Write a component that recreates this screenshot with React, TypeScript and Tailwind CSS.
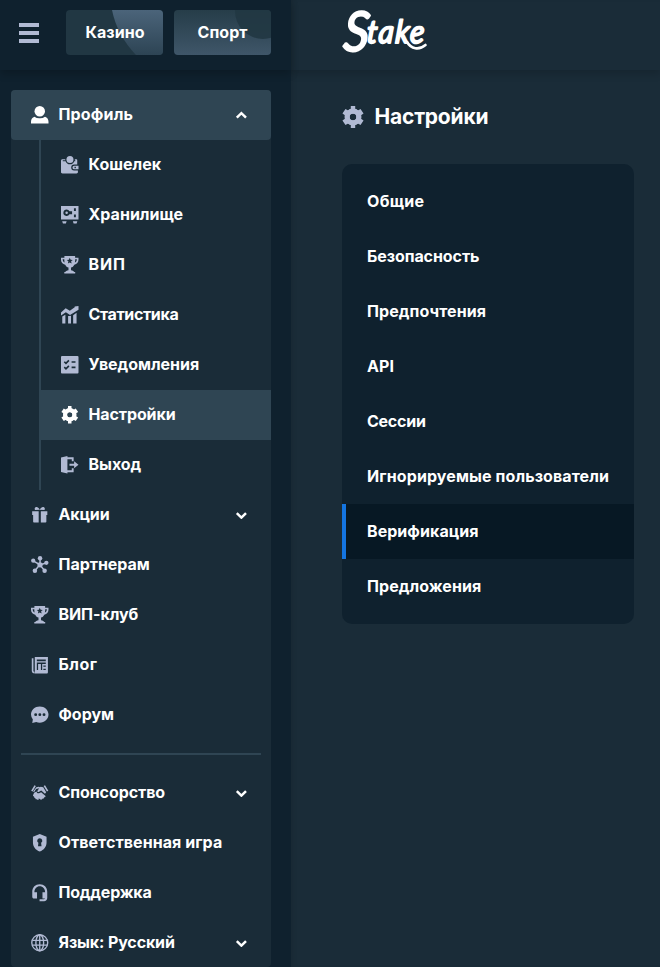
import React from 'react';

interface NavItem {
  label: string;
  icon: React.ReactNode;
  tracking: string;
  arrow?: 'up' | 'down';
  active?: boolean;
}

interface TabItem {
  label: string;
  tracking: string;
  active?: boolean;
}

const Icon: React.FC<{ children: React.ReactNode }> = ({ children }) => (
  <svg viewBox="0 0 18 18" className="w-[17.5px] h-[17.5px] shrink-0" fill="currentColor">
    {children}
  </svg>
);

const GearIcon: React.FC<{ className?: string }> = ({ className = 'w-[17.5px] h-[17.5px]' }) => (
  <svg viewBox="0 0 24 24" className={`shrink-0 ${className}`} fill="currentColor">
    <path
      fillRule="evenodd"
      d="M9.6 0h4.8v3.3l2.9 1.7 2.9-1.7 3.3 4.8-2.7 1.9v4l2.7 1.9-3.3 4.8-2.9-1.7-2.9 1.7V24H9.6v-3.3L6.7 19l-2.9 1.7L.5 15.9 3.2 14v-4L.5 8.1l3.3-4.8L6.7 5l2.9-1.7zM12 8.3a3.7 3.7 0 1 0 0 7.4 3.7 3.7 0 0 0 0-7.4z"
    />
    <circle cx="12" cy="12" r="6.4" fill="none" stroke="currentColor" strokeWidth="5.6" />
  </svg>
);

const UserIcon = () => (
  <Icon>
    <circle cx="9" cy="5.4" r="5.4" />
    <path d="M0 18v-1.8c0-2.6 1.4-4.6 3.6-5.2A8 8 0 0 0 9 12.7 8 8 0 0 0 14.4 11c2.2.6 3.6 2.6 3.6 5.2V18z" />
  </Icon>
);

const WalletIcon = () => (
  <Icon>
    <circle cx="9.2" cy="3.6" r="3.6" />
    <path d="M1.5 3.4h2.9v1H1.8v.9h2.9C5.5 7.3 7 8.5 9.2 8.5s3.8-1.2 4.5-3.2h1v-.9h-.5v-1h1.5c.7 0 1 .4 1 1v4.4h-3.2a3 3 0 0 0 0 6h3.9v1.700c0 1-.6 1.500-1.500 1.500H1.500C.6 18 0 17.500 0 16.500V5c0-1 .6-1.600 1.500-1.600z" />
    <path fillRule="evenodd" d="M13.7 9.9H18v3.8h-4.3a1.9 1.9 0 0 1 0-3.8zm.2 1.2v1.4h1.4v-1.4z" />
  </Icon>
);

const VaultIcon = () => (
  <Icon>
    <path
      fillRule="evenodd"
      d="M0 0h18v14H0zM5.8 3.6a3.3 3.3 0 1 0 2.9 4.8h2.7V5.5H8.7a3.3 3.3 0 0 0-2.9-1.9zM5.8 5.7a1.3 1.3 0 1 1 0 2.6 1.3 1.3 0 0 1 0-2.6zM13.3 2.4v2.8h2V2.4zm0 6.3v2.8h2V8.7z"
    />
    <path d="M1.2 15.7h4.6L5 18H2zm11 0h4.6L16 18h-3z" />
  </Icon>
);

const TrophyIcon = () => (
  <Icon>
    <path
      fillRule="evenodd"
      d="M3.5 0h11v1.7H18v2.2c0 2.6-1.7 4.6-4.3 5-.8 1.6-2 2.7-3.4 3v2.7c1.8.2 3 .9 3.3 1.9h1V18H3.4v-1.5h1c.3-1 1.5-1.7 3.3-1.9v-2.7c-1.4-.3-2.6-1.4-3.4-3C1.7 8.5 0 6.5 0 3.9V1.7h3.5zM1.7 3.3c0 1.6.7 2.9 2 3.5-.3-1-.3-2.2-.3-3.5zm14.6 0h-1.7c0 1.3 0 2.5-.3 3.5 1.3-.6 2-1.9 2-3.5zM9 1.8l-.9 2-2.2.2 1.7 1.5-.5 2.2L9 6.6l1.9 1.1-.5-2.2L12.1 4l-2.2-.2z"
    />
  </Icon>
);

const StatsIcon = () => (
  <Icon>
    <path d="M0 6.600l4.800-4.200 4.300 2.600 5-3.600V.4L18 0v3.900l-8.700 5.300L5 6.500 0 9.800z" />
    <path d="M1.3 10.9l3.2-2V18H1.3zm6-.6h1l2-.2V18h-3zm5.2-.9l3.500-2.400V18h-3.500z" />
  </Icon>
);

const ChecklistIcon = () => (
  <Icon>
    <path d="M1 0h16a1 1 0 0 1 1 1v16a1 1 0 0 1-1 1H1a1 1 0 0 1-1-1V1a1 1 0 0 1 1-1z" />
    <path
      d="M3.4 5.9l1.7 1.6 3-3M3.4 11.5l1.7 1.6 3-3M10.9 6.2h4M10.9 11.7h4"
      fill="none"
      stroke="#1a2c38"
      strokeWidth="1.7"
    />
  </Icon>
);

const LogoutIcon = () => (
  <Icon>
    <path d="M0 1.5L6.6 0v18L0 16.5z" />
    <path d="M6 1.4h7v4.1h-1.9V3.3H6zM6 14.7h5.1v-2.2H13v4.1H6z" />
    <path d="M8.7 8h4.8V5.4L18 9l-4.5 3.6V10H8.7z" />
  </Icon>
);

const GiftIcon = () => (
  <Icon>
    <path d="M9 3.8C7.8 1.2 6 .5 4.7 1.2c-1 .6-1.2 1.9-.6 2.9zM9 3.8c1.2-2.6 3-3.3 4.3-2.6 1 .6 1.2 1.9.6 2.9z" />
    <path d="M1.2 5.3h6.7v3.9H1.2zm8.9 0h6.7v3.9h-6.7zM2.2 9.2h5.7V17H3a.8.8 0 0 1-.8-.8zm7.9 0h5.7v7c0 .5-.3.8-.8.8h-4.9z" />
  </Icon>
);

const AffiliateIcon = () => (
  <Icon>
    <path d="M9.3 9V2.5M9.3 9L2.2 5M9.3 9l6.5-1.8M9 9l-4.6 5.6M9 9l4.7 5.6" stroke="currentColor" strokeWidth="1.5" />
    <circle cx="9.3" cy="9" r="2.7" />
    <circle cx="9.3" cy="2.4" r="2.3" />
    <circle cx="2.3" cy="4.8" r="2.2" />
    <circle cx="15.8" cy="7" r="2.2" />
    <circle cx="4" cy="15.2" r="2.3" />
    <circle cx="14" cy="15.2" r="2.3" />
  </Icon>
);

const BlogIcon = () => (
  <Icon>
    <path d="M.8 2.3h1.7v12.8c0 .8.5 1.2 1.2 1.2V18C2 18 .8 17 .8 15.2z" />
    <path
      fillRule="evenodd"
      d="M3.9 1H17.4v15.6c0 .9-.5 1.4-1.4 1.4H3.9zM6 3.6v1.8h9.2V3.6zM6 6.8v7.7h1.3V8.3h2.9v6.2h1.3V8.3h3.7V6.8zm6.7 3v1.3h2.5V9.8zm0 3.2v1.5h2.5V13z"
    />
  </Icon>
);

const ForumIcon = () => (
  <Icon>
    <path
      fillRule="evenodd"
      d="M9 .5c5 0 9 3.6 9 8.3s-4 8.3-9 8.3c-1.3 0-2.5-.2-3.6-.7L1.3 17.5l.6-3.7A8 8 0 0 1 0 8.8C0 4.1 4 .5 9 .5zM4.8 7.4a1.5 1.5 0 1 0 0 3 1.5 1.5 0 0 0 0-3zm4.300 0a1.500 1.500 0 1 0 0 3 1.500 1.500 0 0 0 0-3zm4.300 0a1.500 1.500 0 1 0 0 3 1.500 1.500 0 0 0 0-3z"
    />
  </Icon>
);

const HandshakeIcon = () => (
  <Icon>
    <path d="M4.3 1.7L.9 7.4M13.7 1.7l3.4 5.7" stroke="currentColor" strokeWidth="1.7" />
    <path d="M5.500 3.400l2.500-.5 1 .5 1-.5 2.600.5 3 5.200-1.200 1.300-3.900-3.300-2.600 1.600c-1 .4-1.700-.5-1.200-1.300l1.700-2.500-3.200.7-2 3.300-1-.7z" />
    <path d="M3.200 8.900l2.500-1.200c.2 1.700 1.700 2.400 3.200 1.600l1.500-.9 4.300 3.700c.7.900-.3 2-1.300 1.500.4 1-.8 1.900-1.700 1.300 0 1-1.100 1.500-1.900 1l-2-1.200.3.900c-.6.900-1.700.8-2.100 0-1 .3-1.700-.5-1.500-1.300-1 .1-1.600-.7-1.300-1.500-1-.1-1.500-1-.9-1.800z" />
  </Icon>
);

const ShieldIcon = () => (
  <Icon>
    <path
      fillRule="evenodd"
      d="M9 0l7 2.7v6c0 4.3-2.8 7.8-7 9.3-4.2-1.5-7-5-7-9.3v-6zM9 4.3a2.6 2.6 0 0 0-1.4 4.8L7.2 12.7h3.6l-.4-3.6A2.6 2.6 0 0 0 9 4.3z"
    />
  </Icon>
);

const SupportIcon = () => (
  <Icon>
    <path d="M1.3 8C1.3 3.5 4.6.3 9 .3S16.7 3.5 16.7 8v6.5c0 1.9-1.4 3.2-3.2 3.2H8.8v-2.1h4.4c.6 0 1-.2 1.3-.7h-2.7V8.4h2.7C14.4 4.9 12.2 2.4 9 2.4S3.6 4.9 3.5 8.4h2.7v6.5H3.1c-1.1 0-1.8-.7-1.8-1.8z" />
  </Icon>
);

const GlobeIcon = () => (
  <Icon>
    <g fill="none" stroke="currentColor" strokeWidth="1.4">
      <circle cx="9" cy="9" r="8.2" />
      <ellipse cx="9" cy="9" rx="4" ry="8.2" />
      <path d="M9 1v16M1.3 6.6h15.4M1.3 11.5h15.4" />
    </g>
  </Icon>
);

const Chevron: React.FC<{ dir: 'up' | 'down' }> = ({ dir }) => (
  <svg viewBox="0 0 12 8" className="ml-auto w-3 h-2" fill="none" stroke="#fff" strokeWidth="2.5">
    <path d={dir === 'up' ? 'M1.8 6.6L6.4 2.2 11 6.600' : 'M1.8 2.200L6.400 6.600 11 2.200'} />
  </svg>
);

const StakeLogo = () => (
  <svg viewBox="0 0 90 50" className="w-[90px] h-[50px] overflow-visible" fill="#fff" stroke="#fff" strokeLinejoin="round">
    <text
      transform="translate(0.5 41.5) skewX(-4) scale(0.93 1)"
      fontFamily="Lato"
      fontStyle="italic"
      fontWeight="400"
      strokeWidth="1.9"
    >
      <tspan fontSize="55">S</tspan>
      <tspan fontSize="32" dx="-3" dy="-7.5" letterSpacing="1.6">take</tspan>
    </text>
    <path d="M65 33c4 7 12 8.500 18.500 3" fill="none" strokeWidth="2.6" strokeLinecap="round" />
  </svg>
);

const profileItems: NavItem[] = [
  { label: 'Кошелек', icon: <WalletIcon />, tracking: 'tracking-[0.02px]' },
  { label: 'Хранилище', icon: <VaultIcon />, tracking: 'tracking-[0.02px]' },
  { label: 'ВИП', icon: <TrophyIcon />, tracking: 'tracking-[0.9px]' },
  { label: 'Статистика', icon: <StatsIcon />, tracking: 'tracking-[-0.38px]' },
  { label: 'Уведомления', icon: <ChecklistIcon />, tracking: 'tracking-[-0.04px]' },
  { label: 'Настройки', icon: <GearIcon />, tracking: 'tracking-[-0.12px]', active: true },
  { label: 'Выход', icon: <LogoutIcon />, tracking: 'tracking-[-0.05px]' },
];

const mainItems: NavItem[] = [
  { label: 'Акции', icon: <GiftIcon />, tracking: 'tracking-[-0.15px]', arrow: 'down' },
  { label: 'Партнерам', icon: <AffiliateIcon />, tracking: 'tracking-[-0.05px]' },
  { label: 'ВИП-клуб', icon: <TrophyIcon />, tracking: 'tracking-[-0.08px]' },
  { label: 'Блог', icon: <BlogIcon />, tracking: 'tracking-[0.5px]' },
  { label: 'Форум', icon: <ForumIcon />, tracking: 'tracking-[0px]' },
];

const bottomItems: NavItem[] = [
  { label: 'Спонсорство', icon: <HandshakeIcon />, tracking: 'tracking-[-0.08px]', arrow: 'down' },
  { label: 'Ответственная игра', icon: <ShieldIcon />, tracking: 'tracking-[0.06px]' },
  { label: 'Поддержка', icon: <SupportIcon />, tracking: 'tracking-[-0.2px]' },
  { label: 'Язык: Русский', icon: <GlobeIcon />, tracking: 'tracking-[-0.13px]', arrow: 'down' },
];

const tabs: TabItem[] = [
  { label: 'Общие', tracking: 'tracking-[0.3px]' },
  { label: 'Безопасность', tracking: 'tracking-[-0.08px]' },
  { label: 'Предпочтения', tracking: 'tracking-[0.08px]' },
  { label: 'API', tracking: 'tracking-[0.05px]' },
  { label: 'Сессии', tracking: 'tracking-[-0.25px]' },
  { label: 'Игнорируемые пользователи', tracking: 'tracking-[0.1px]' },
  { label: 'Верификация', tracking: 'tracking-[0.05px]', active: true },
  { label: 'Предложения', tracking: 'tracking-[0.06px]' },
];

const NavRow: React.FC<{ item: NavItem }> = ({ item }) => (
  <a
    className={`flex items-center h-[50px] pl-5 pr-6 text-base whitespace-nowrap ${
      item.active ? 'bg-[#2f4553] text-white' : 'text-[#b1bad3]'
    }`}
  >
    {item.icon}
    <span className={`ml-2.5 -mt-0.5 text-white ${item.tracking}`}>{item.label}</span>
    {item.arrow && <Chevron dir={item.arrow} />}
  </a>
);

const Sidebar = () => (
  <aside className="w-[291px] h-full shrink-0 bg-[#0f212e] flex flex-col">
    <div className="h-[70px] shrink-0 flex items-center pl-[19px] pb-[5px] shadow-[0_4px_8px_rgba(0,0,0,0.2)]">
      <button className="w-5 h-5 flex flex-col justify-between">
        <span className="w-5 h-1 bg-[#b1bad3]" />
        <span className="w-5 h-1 bg-[#b1bad3]" />
        <span className="w-5 h-1 bg-[#b1bad3]" />
      </button>
      <button className="relative ml-[27px] w-[97px] h-[45px] rounded-[4px] overflow-hidden bg-[#213743]">
        <svg className="absolute inset-0" width="97" height="45">
          <defs>
            <linearGradient id="casino" x1="0" y1="0" x2="0" y2="1">
              <stop offset="0" stopColor="#4b647a" />
              <stop offset="1" stopColor="#2d4454" />
            </linearGradient>
          </defs>
          <path d="M46 0Q51 25 70 45H97V0z" fill="url(#casino)" />
        </svg>
        <span className="relative top-[-1px] left-[0.5px] tracking-[0.05px]">Казино</span>
      </button>
      <button className="relative ml-[11px] w-[97px] h-[45px] rounded-[4px] overflow-hidden bg-linear-to-b from-[#263d49] to-[#3f5669]">
        <svg className="absolute inset-0" width="97" height="45">
          <circle cx="89" cy="1" r="28" fill="#213743" opacity="0.9" />
        </svg>
        <span className="relative top-[-1px] tracking-[0.05px]">Спорт</span>
      </button>
    </div>

    <nav className="mt-5 ml-[11px] w-[260px] h-[877px] bg-[#1a2c38] rounded-[4px]">
      <div className="bg-[#2f4553] rounded-[4px]">
        <a className="flex items-center h-[50px] pl-5 pr-6 text-white">
          <UserIcon />
          <span className="ml-2.5 -mt-0.5 tracking-[0.16px]">Профиль</span>
          <Chevron dir="up" />
        </a>
      </div>
      <div className="ml-7 border-l-2 border-[#2f4553]">
        {profileItems.map((item) => (
          <NavRow key={item.label} item={item} />
        ))}
      </div>
      {mainItems.map((item) => (
        <NavRow key={item.label} item={item} />
      ))}
      <div className="mx-2.5 my-[13px] h-0.5 bg-[#2f4553]" />
      {bottomItems.map((item) => (
        <NavRow key={item.label} item={item} />
      ))}
    </nav>
  </aside>
);

const App: React.FC = () => {
  return (
    <div className="flex w-full h-[967px] overflow-hidden bg-[#1a2c38] text-white text-base font-bold font-['Inter','Noto_Sans',sans-serif]">
      <Sidebar />
      <main className="flex-1 min-w-0 overflow-hidden shadow-[inset_4px_0_6px_-4px_rgba(0,0,0,0.15)]">
        <header className="h-[70px] pl-[51px] pt-[9px] shadow-[0_4px_8px_rgba(0,0,0,0.16)]">
          <StakeLogo />
        </header>
        <div className="pl-[51px] pr-[26px]">
          <div className="flex items-center h-[94px]">
            <GearIcon className="w-[22px] h-[22px] text-[#b1bad3]" />
            <h1 className="ml-[10.5px] text-[21px] leading-7 tracking-[-0.2px]">Настройки</h1>
          </div>
          <div className="py-2.5 rounded-[10px] bg-[#0f212e]">
            {tabs.map((tab) => (
              <a
                key={tab.label}
                className={`flex items-center h-[55px] pl-[21px] pb-0.5 border-l-4 whitespace-nowrap ${
                  tab.active ? 'bg-[#071824] border-[#1475e1]' : 'border-transparent'
                } ${tab.tracking}`}
              >
                {tab.label}
              </a>
            ))}
          </div>
        </div>
      </main>
    </div>
  );
};

export default App;
